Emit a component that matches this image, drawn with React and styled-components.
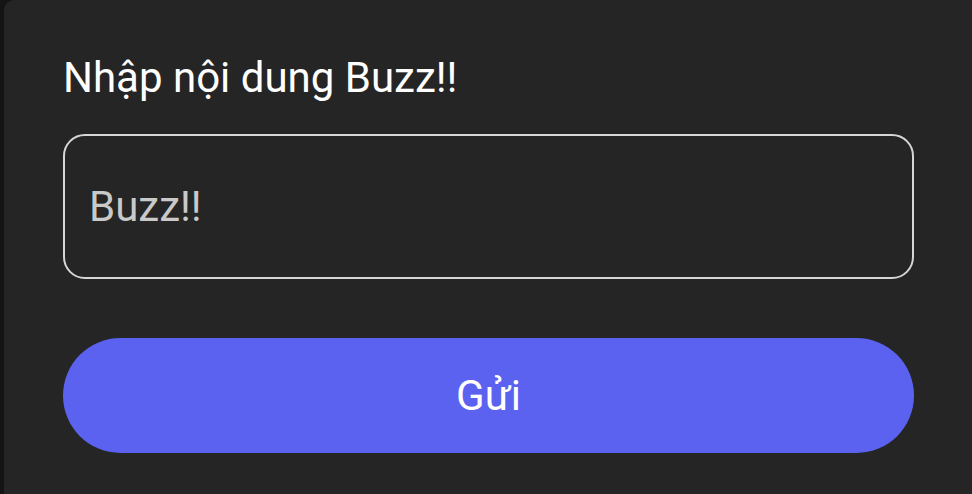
import styled, { createGlobalStyle } from 'styled-components';

const GlobalStyle = createGlobalStyle`
  html, body {
    margin: 0;
    padding: 0;
    background: #161616;
    font-family: Roboto, 'Noto Sans', sans-serif;
  }
`;

const Screen = styled.div`
  width: 972px;
  height: 494px;
  display: flex;
  background: #141414;
  overflow: hidden;
`;

const Dialog = styled.section`
  flex: 1;
  margin-left: 4px;
  background: #252525;
  border-top-left-radius: 10px;
  box-sizing: border-box;
  padding: 51px 58px 0 59px;
  display: flex;
  flex-direction: column;
`;

const Title = styled.h2`
  margin: 0;
  color: #ffffff;
  font-size: 42px;
  font-weight: 400;
  line-height: 54px;
`;

const Field = styled.input`
  margin-top: 29px;
  height: 145px;
  box-sizing: border-box;
  border: 2.5px solid #d6d6d6;
  border-radius: 22px;
  background: transparent;
  padding: 0 24px;
  color: #ffffff;
  font-family: inherit;
  font-size: 42px;
  outline: none;

  &::placeholder {
    color: #c9c9c9;
  }
`;

const SendButton = styled.button`
  margin-top: 59px;
  height: 115px;
  border: none;
  border-radius: 58px;
  background: #5b62f0;
  color: #ffffff;
  font-family: inherit;
  font-size: 42px;
  cursor: pointer;
`;

export default function App() {
  return (
    <>
      <GlobalStyle />
      <Screen>
        <Dialog>
          <Title>Nhập nội dung Buzz!!</Title>
          <Field placeholder="Buzz!!" />
          <SendButton>Gửi</SendButton>
        </Dialog>
      </Screen>
    </>
  );
}
